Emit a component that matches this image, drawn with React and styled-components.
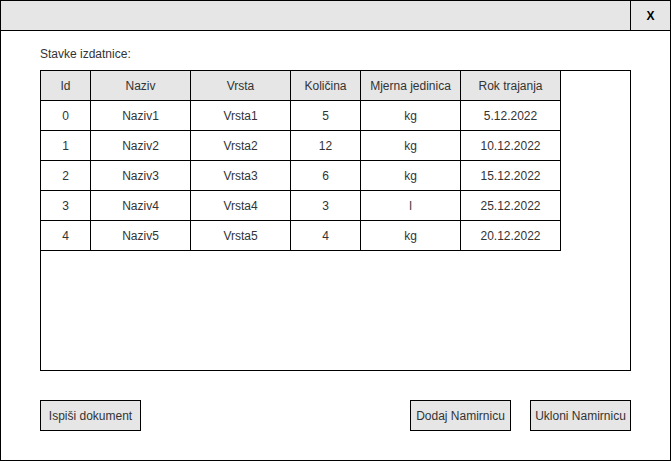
import React from "react";
import styled, { createGlobalStyle } from "styled-components";

const Global = createGlobalStyle`
  html, body { margin: 0; padding: 0; background: #fff; }
  body { font-family: "Liberation Sans", Arial, sans-serif; font-size: 12px; color: #333; }
  * { box-sizing: border-box; }
`;

const Window = styled.div`
  width: 671px;
  height: 461px;
  border: 1px solid #000;
  background: #fff;
  display: flex;
  flex-direction: column;
`;

const TitleBar = styled.div`
  height: 30px;
  flex: none;
  background: #e6e6e6;
  border-bottom: 1px solid #000;
  display: flex;
  justify-content: flex-end;
`;

const CloseButton = styled.div`
  width: 40px;
  border-left: 1px solid #000;
  display: flex;
  align-items: center;
  justify-content: center;
  font-weight: bold;
  font-size: 12px;
  color: #000;
`;

const Body = styled.div`
  flex: 1;
  padding: 16px 39px 0 39px;
  display: flex;
  flex-direction: column;
`;

const Label = styled.div`
  line-height: 14px;
  height: 14px;
  margin-bottom: 9px;
`;

const TableBox = styled.div`
  width: 591px;
  height: 301px;
  border: 1px solid #000;
  display: grid;
  grid-template-columns: 50px 100px 100px 70px 100px 100px;
  grid-auto-rows: 30px;
  align-content: start;
`;

const Cell = styled.div`
  border-right: 1px solid #000;
  border-bottom: 1px solid #000;
  display: flex;
  align-items: center;
  justify-content: center;
  background: ${(p) => (p.$head ? "#e6e6e6" : "#fff")};
  white-space: nowrap;
`;

const Actions = styled.div`
  margin-top: 29px;
  display: flex;
  gap: 19px;
`;

const Button = styled.div`
  width: 101px;
  height: 31px;
  border: 1px solid #000;
  background: #e6e6e6;
  display: flex;
  align-items: center;
  justify-content: center;
  white-space: nowrap;
  ${(p) => (p.$push ? "margin-left: auto;" : "")}
`;

const headers = ["Id", "Naziv", "Vrsta", "Količina", "Mjerna jedinica", "Rok trajanja"];
const rows = [
  ["0", "Naziv1", "Vrsta1", "5", "kg", "5.12.2022"],
  ["1", "Naziv2", "Vrsta2", "12", "kg", "10.12.2022"],
  ["2", "Naziv3", "Vrsta3", "6", "kg", "15.12.2022"],
  ["3", "Naziv4", "Vrsta4", "3", "l", "25.12.2022"],
  ["4", "Naziv5", "Vrsta5", "4", "kg", "20.12.2022"],
];

export default function App() {
  return (
    <>
      <Global />
      <Window>
        <TitleBar>
          <CloseButton>X</CloseButton>
        </TitleBar>
        <Body>
          <Label>Stavke izdatnice:</Label>
          <TableBox>
            {headers.map((h) => (
              <Cell key={h} $head>{h}</Cell>
            ))}
            {rows.map((r, i) =>
              r.map((c, j) => <Cell key={i + "-" + j}>{c}</Cell>)
            )}
          </TableBox>
          <Actions>
            <Button>Ispiši dokument</Button>
            <Button $push>Dodaj Namirnicu</Button>
            <Button>Ukloni Namirnicu</Button>
          </Actions>
        </Body>
      </Window>
    </>
  );
}
